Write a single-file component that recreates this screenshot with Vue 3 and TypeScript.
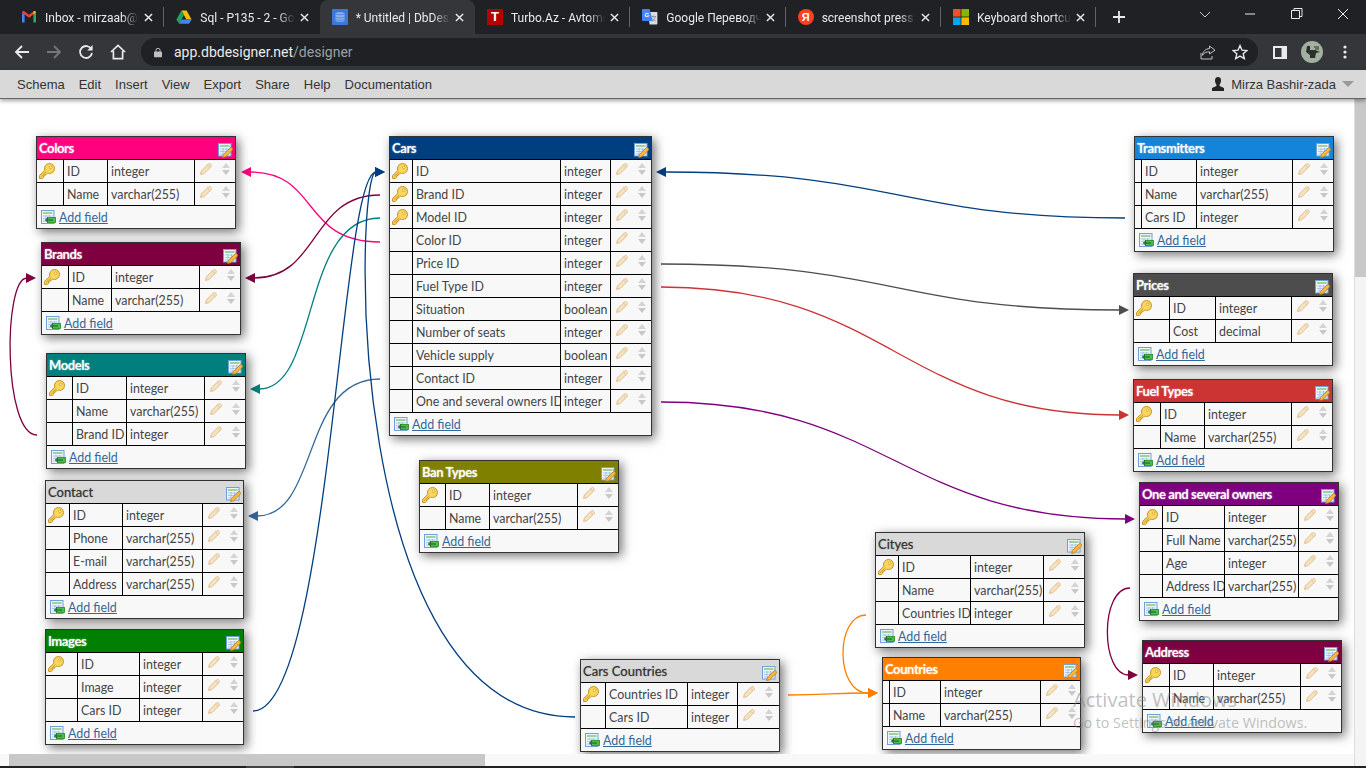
<script setup lang="ts">
interface Field { name: string; type: string; key?: boolean }
interface Table {
  title: string
  x: number
  y: number
  right: number
  lines: [number, number, number]
  color: string
  dark?: boolean
  fields: Field[]
}

const f = (name: string, type: string, key = false): Field => ({ name, type, key })
const V = 'varchar(255)'
const I = 'integer'

const tables: Table[] = [
  { title: 'Colors', x: 36, y: 136, right: 236, lines: [64, 108, 195], color: '#ff007f', fields: [f('ID', I, true), f('Name', V)] },
  { title: 'Brands', x: 41, y: 242, right: 241, lines: [69, 112, 200], color: '#7f0040', fields: [f('ID', I, true), f('Name', V)] },
  { title: 'Models', x: 46, y: 353, right: 246, lines: [73, 127, 205], color: '#007f7f', fields: [f('ID', I, true), f('Name', V), f('Brand ID', I)] },
  { title: 'Contact', x: 45, y: 480, right: 244, lines: [70, 123, 203], color: '#d9d9d9', dark: true, fields: [f('ID', I, true), f('Phone', V), f('E-mail', V), f('Address', V)] },
  { title: 'Images', x: 45, y: 629, right: 244, lines: [78, 140, 203], color: '#007f00', fields: [f('ID', I, true), f('Image', I), f('Cars ID', I)] },
  {
    title: 'Cars', x: 389, y: 136, right: 652, lines: [413, 561, 611], color: '#003f7f',
    fields: [f('ID', I, true), f('Brand ID', I, true), f('Model ID', I, true), f('Color ID', I), f('Price ID', I), f('Fuel Type ID', I), f('Situation', 'boolean'), f('Number of seats', I), f('Vehicle supply', 'boolean'), f('Contact ID', I), f('One and several owners ID', I)]
  },
  { title: 'Ban Types', x: 419, y: 460, right: 619, lines: [446, 490, 578], color: '#7f7f00', fields: [f('ID', I, true), f('Name', V)] },
  { title: 'Transmitters', x: 1134, y: 136, right: 1334, lines: [1142, 1197, 1293], color: '#1384d8', fields: [f('ID', I), f('Name', V), f('Cars ID', I)] },
  { title: 'Prices', x: 1133, y: 273, right: 1333, lines: [1170, 1216, 1292], color: '#4d4d4d', fields: [f('ID', I, true), f('Cost', 'decimal')] },
  { title: 'Fuel Types', x: 1133, y: 379, right: 1333, lines: [1161, 1205, 1292], color: '#cc3333', fields: [f('ID', I, true), f('Name', V)] },
  { title: 'One and several owners', x: 1139, y: 482, right: 1339, lines: [1163, 1225, 1299], color: '#7f007f', fields: [f('ID', I, true), f('Full Name', V), f('Age', I), f('Address ID', V)] },
  { title: 'Cityes', x: 875, y: 532, right: 1085, lines: [899, 971, 1044], color: '#d9d9d9', dark: true, fields: [f('ID', I, true), f('Name', V), f('Countries ID', I)] },
  { title: 'Cars Countries', x: 580, y: 659, right: 780, lines: [606, 688, 738], color: '#d9d9d9', dark: true, fields: [f('Countries ID', I, true), f('Cars ID', I)] },
  { title: 'Countries', x: 882, y: 657, right: 1081, lines: [890, 941, 1041], color: '#ff7f00', fields: [f('ID', I), f('Name', V)] },
  { title: 'Address', x: 1142, y: 640, right: 1342, lines: [1170, 1214, 1301], color: '#7f0040', fields: [f('ID', I, true), f('Name', V)] }
]

interface Link { d: string; color: string; tip: [number, number]; dir: 1 | -1 }

const links: Link[] = [
  { d: 'M380 242 C 300 242 320 172 250 172', color: '#ff007f', tip: [241, 172], dir: -1 },
  { d: 'M380 195 C 310 195 320 278 254 278', color: '#7f0040', tip: [245, 278], dir: -1 },
  { d: 'M380 218 C 300 218 320 389 259 389', color: '#007f7f', tip: [250, 389], dir: -1 },
  { d: 'M380 379 C 300 379 320 516 257 516', color: '#336699', tip: [248, 516], dir: -1 },
  { d: 'M253 711 C 330 711 340 172 376 172', color: '#003f7f', tip: [385, 172], dir: 1 },
  { d: 'M575 717 C 340 717 355 172 376 172', color: '#003f7f', tip: [385, 172], dir: 1 },
  { d: 'M1125 218 C 900 218 900 172 665 172', color: '#003f7f', tip: [656, 172], dir: -1 },
  { d: 'M661 264 C 900 264 890 310 1120 310', color: '#4d4d4d', tip: [1129, 310], dir: 1 },
  { d: 'M661 287 C 890 287 900 415 1120 415', color: '#cc3333', tip: [1129, 415], dir: 1 },
  { d: 'M661 402 C 890 402 900 519 1126 519', color: '#7f007f', tip: [1135, 519], dir: 1 },
  { d: 'M37 435 C 3 435 3 278 27 278', color: '#7f0040', tip: [36, 278], dir: 1 },
  { d: 'M1130 588 C 1100 588 1100 675 1129 675', color: '#7f0040', tip: [1138, 675], dir: 1 },
  { d: 'M788 695 C 830 695 830 693 868 693', color: '#ff7f00', tip: [878, 693], dir: 1 },
  { d: 'M866 615 C 835 615 835 693 868 693', color: '#ff7f00', tip: [878, 693], dir: 1 }
]

const head = (l: Link) => {
  const [x, y] = l.tip
  const b = x - l.dir * 10
  return `${x},${y} ${b},${y - 5} ${b},${y + 5}`
}

const tableStyle = (t: Table) => ({
  left: `${t.x}px`,
  top: `${t.y - 99}px`,
  width: `${t.right - t.x}px`
})

const headStyle = (t: Table) => ({ background: t.color })

const rowStyle = (t: Table) => ({
  gridTemplateColumns: `${t.lines[0] - t.x - 1}px ${t.lines[1] - t.lines[0]}px ${t.lines[2] - t.lines[1]}px 1fr`
})

const tabs = [
  { id: 'gmail', title: 'Inbox - mirzaab@gmail.com', sep: true },
  { id: 'drive', title: 'Sql - P135 - 2 - Google Drive', sep: false },
  { id: 'db', title: '* Untitled | DbDesigner', sep: false, active: true },
  { id: 'turbo', title: 'Turbo.Az - Avtomobil elanları', sep: true },
  { id: 'translate', title: 'Google Переводчик', sep: true },
  { id: 'ya', title: 'screenshot press', sep: true },
  { id: 'ms', title: 'Keyboard shortcuts', sep: true }
]

const menu = ['Schema', 'Edit', 'Insert', 'View', 'Export', 'Share', 'Help', 'Documentation']
</script>

<template>
  <div class="app">
    <svg class="defs" width="0" height="0">
      <symbol id="key" viewBox="0 0 16 16">
        <path d="M10.5 .5a5 5 0 0 1 0 10c-.7 0-1.300-.1-1.900-.4L7.400 11.300H6v1.500H4.500v1.400L3.400 15.400H.6V12.400L5.900 7.400A5 5 0 0 1 10.500 .5z" fill="#f9d65c" stroke="#c8921e" stroke-width="1" />
        <circle cx="11.600" cy="4.300" r="1.300" fill="#fff6c8" stroke="#c8921e" stroke-width=".7" />
        <path d="M2 13.600 7.400 8.600" stroke="#c8921e" stroke-width=".8" fill="none" />
      </symbol>
      <symbol id="pencil" viewBox="0 0 12 12">
        <path d="M.6 11.4 1.4 8 8.4 1a1.4 1.4 0 0 1 2 0l.6.6a1.4 1.4 0 0 1 0 2L4 10.6z" fill="#f7e4bf" stroke="#dfbd8e" stroke-width="1" />
        <path d="M7.4 2 10 4.6" stroke="#dfbd8e" stroke-width=".8" />
      </symbol>
      <symbol id="sort" viewBox="0 0 8 12">
        <path d="M4 0 8 5H0z" fill="#d4d4d4" />
        <path d="M0 7h8L4 12z" fill="#c8c8c8" />
      </symbol>
      <symbol id="edit" viewBox="0 0 15 15">
        <rect x=".5" y=".5" width="12.500" height="12.500" fill="#eef4fc" stroke="#6fa0dc" />
        <path d="M2 3h9.500" stroke="#7cc36a" stroke-width="1.400" />
        <path d="M2 6h9.500M2 8.500h9.500M2 11h9.500M5 5v7M8.500 5v7" stroke="#9dbde6" stroke-width=".8" />
        <path d="M4.600 14.600 5.400 11.600 12 5a1.300 1.300 0 0 1 1.900 0l.4.4a1.300 1.300 0 0 1 0 1.900L7.600 13.800z" fill="#f9b93c" stroke="#b9781a" stroke-width=".8" />
      </symbol>
      <symbol id="add" viewBox="0 0 15 15">
        <rect x=".5" y=".5" width="12.500" height="13" fill="#eef4fc" stroke="#6fa0dc" />
        <path d="M2 3h9.500" stroke="#7cc36a" stroke-width="1.400" />
        <path d="M2 6h9.500M2 8.500h4M2 11h4M5 5v7M8.500 5v2" stroke="#9dbde6" stroke-width=".8" />
        <rect x="6.500" y="7.500" width="8" height="5" fill="#4fbb4a" stroke="#1f8a1f" stroke-width=".8" />
        <path d="M12 10H4.500M7 7.800 4.500 10 7 12.200" stroke="#14601c" stroke-width="1" fill="none" />
      </symbol>
    </svg>

    <div class="tabstrip">
      <div v-for="tab in tabs" :key="tab.id" class="tab" :class="{ active: tab.active, sep: tab.sep }">
        <svg v-if="tab.id === 'gmail'" class="fav" viewBox="0 0 16 16">
          <path d="M1 13.500V3.600L3.600 5.400v8.100z" fill="#4285f4" />
          <path d="M12.400 13.500V5.400L15 3.600v9.900z" fill="#34a853" />
          <path d="M1 3.600C1 2.200 2.600 1.600 3.600 2.400L8 5.800 12.400 2.400C13.400 1.600 15 2.200 15 3.600L12.400 5.400 8 8.800 3.600 5.400z" fill="#ea4335" />
          <path d="M12.400 2.400C13.400 1.600 15 2.200 15 3.600L12.400 5.400z" fill="#fbbc04" />
        </svg>
        <svg v-else-if="tab.id === 'drive'" class="fav" viewBox="0 0 16 16">
          <path d="M5.400 1.600h5.200L15.600 10.400h-5.200z" fill="#fbbc04" />
          <path d="M5.400 1.600 .4 10.400 3 14.800 8 6z" fill="#1fa463" />
          <path d="M5.400 10.400h10.200l-2.600 4.400H3z" fill="#4285f4" />
        </svg>
        <svg v-else-if="tab.id === 'db'" class="fav" viewBox="0 0 16 16">
          <rect width="16" height="16" rx="1" fill="#3c78d8" />
          <path d="M3.500 4.500C3.500 2.800 12.500 2.800 12.500 4.500V11.500C12.500 13.200 3.500 13.200 3.500 11.500z" fill="#8fb4ea" />
          <path d="M3.500 4.500C3.500 6.200 12.500 6.200 12.500 4.500M3.500 7.500C3.500 9.200 12.500 9.200 12.500 7.500M3.500 10C3.500 11.700 12.500 11.700 12.500 10" fill="none" stroke="#3c78d8" stroke-width=".8" />
        </svg>
        <span v-else-if="tab.id === 'turbo'" class="fav turbo">T</span>
        <svg v-else-if="tab.id === 'translate'" class="fav" viewBox="0 0 16 16">
          <path d="M6 3h8.400c.6 0 1 .4 1 1v10.400c0 .6-.4 1-1 1H7.600z" fill="#dadce0" />
          <path d="M1 0h6.600l3.200 12H1c-.6 0-1-.4-1-1V1c0-.6.4-1 1-1z" fill="#4285f4" />
          <text x="2.400" y="8" class="gtext">G</text>
          <path d="M9.500 7.500h4.500M11.700 6.500v1M10.200 12.500c1.600-1 2.600-2.400 3-5M10.400 8.600c.6 1.600 1.800 3 3.400 3.600" stroke="#8a8d93" stroke-width=".8" fill="none" />
        </svg>
        <span v-else-if="tab.id === 'ya'" class="fav ya">Я</span>
        <svg v-else class="fav" viewBox="0 0 16 16">
          <rect width="7.600" height="7.600" fill="#f25022" />
          <rect x="8.400" width="7.600" height="7.600" fill="#7fba00" />
          <rect y="8.400" width="7.600" height="7.600" fill="#00a4ef" />
          <rect x="8.400" y="8.400" width="7.600" height="7.600" fill="#ffb900" />
        </svg>
        <span class="tab-title">{{ tab.title }}</span>
        <svg class="tab-close" viewBox="0 0 10 10">
          <path d="M1 1l8 8M9 1l-8 8" stroke="#e8eaed" stroke-width="1.600" />
        </svg>
      </div>
      <svg class="plus" viewBox="0 0 12 12">
        <path d="M6 0v12M0 6h12" stroke="#e8eaed" stroke-width="1.800" />
      </svg>
      <div class="win-ctrls">
        <svg class="chev" viewBox="0 0 12 7"><path d="M1 1l5 5 5-5" fill="none" stroke="#c8c9cb" stroke-width="1" /></svg>
        <svg class="min" viewBox="0 0 12 12"><path d="M1 6h10" stroke="#e8eaed" stroke-width="1" /></svg>
        <svg class="max" viewBox="0 0 12 12"><path d="M3 2.500V.5h8v8H9M.5 2.500h8v8h-8z" fill="none" stroke="#e8eaed" stroke-width="1" /></svg>
        <svg class="cls" viewBox="0 0 12 12"><path d="M1 1l10 10M11 1L1 11" stroke="#e8eaed" stroke-width="1" /></svg>
      </div>
    </div>

    <div class="toolbar">
      <button class="tool">
        <svg viewBox="0 0 16 16" width="16" height="16"><path d="M15 8H2M8 2 2 8l6 6" fill="none" stroke="#e8eaed" stroke-width="1.800" /></svg>
      </button>
      <button class="tool">
        <svg viewBox="0 0 16 16" width="16" height="16"><path d="M1 8h13M8 2l6 6-6 6" fill="none" stroke="#75777b" stroke-width="1.800" /></svg>
      </button>
      <button class="tool">
        <svg viewBox="0 0 16 16" width="16" height="16"><path d="M13.400 5.200A6 6 0 1 0 14 9" fill="none" stroke="#e8eaed" stroke-width="1.800" /><path d="M14.600 1v5.400H9.200z" fill="#e8eaed" /></svg>
      </button>
      <button class="tool">
        <svg viewBox="0 0 16 16" width="16" height="16"><path d="M1 8 8 1.400 15 8M3.400 7V14.600H12.600V7" fill="none" stroke="#e8eaed" stroke-width="1.700" /></svg>
      </button>
      <div class="omnibox">
        <svg class="lock" viewBox="0 0 10 12"><path d="M2.400 5V3.400a2.600 2.600 0 0 1 5.200 0V5" fill="none" stroke="#bdc1c6" stroke-width="1.200" /><rect y="4.600" width="10" height="7.400" rx="1" fill="#bdc1c6" /></svg>
        <span class="url">app.dbdesigner.net<span class="url-path">/designer</span></span>
        <svg class="omni-share" viewBox="0 0 16 16"><path d="M9.500 2 15 6.200 9.500 10V7.800C6 7.800 3.800 9 2.400 11.400 2.800 7.400 5.400 4.800 9.500 4.500z" fill="none" stroke="#bdc1c6" stroke-width="1" /><path d="M1 9v6h11v-3" fill="none" stroke="#bdc1c6" stroke-width="1" /></svg>
        <svg class="omni-star" viewBox="0 0 16 16"><path d="M8 1.600 10 6.200l4.900.4-3.700 3.200 1.100 4.800L8 12.100l-4.300 2.500 1.100-4.800L1.100 6.600 6 6.200z" fill="none" stroke="#e8eaed" stroke-width="1.400" /></svg>
      </div>
      <button class="tool panel">
        <svg viewBox="0 0 14 13" width="14" height="13"><rect width="14" height="13" fill="#e8eaed" /><rect x="2" y="2" width="6.500" height="9" fill="#35363a" /></svg>
      </button>
      <button class="tool">
        <svg viewBox="0 0 22 22" width="22" height="22"><circle cx="11" cy="11" r="11" fill="#a3b0a0" /><path d="M6 5h3v4h5l5 2-4 1-1 5H9v-3L5 11z" fill="#2c302c" /><path d="M13 6h5M14 8h4" stroke="#2c302c" /></svg>
      </button>
      <button class="tool dots">
        <svg viewBox="0 0 4 14" width="4" height="14"><circle cx="2" cy="2" r="1.600" fill="#e8eaed" /><circle cx="2" cy="7" r="1.600" fill="#e8eaed" /><circle cx="2" cy="12" r="1.600" fill="#e8eaed" /></svg>
      </button>
    </div>

    <div class="menubar">
      <span v-for="item in menu" :key="item" class="menu-item">{{ item }}</span>
      <div class="user">
        <svg viewBox="0 0 14 14" width="14" height="14"><path d="M7 0c2 0 3 1.400 3 3.400C10 5.400 9 7 8.600 7.600V9l4.400 2v3H1v-3l4.400-2V7.600C5 7 4 5.400 4 3.400 4 1.400 5 0 7 0z" fill="#222" /></svg>
        <span class="user-name">Mirza Bashir-zada</span>
        <span class="caret"></span>
      </div>
    </div>

    <div class="workspace">
      <div class="stage">
        <div class="canvas">
          <svg class="links" viewBox="0 99 1354 655" width="1354" height="655">
            <g v-for="(l, i) in links" :key="i">
              <path :d="l.d" fill="none" :stroke="l.color" stroke-width="1.300" />
              <polygon :points="head(l)" :fill="l.color" />
            </g>
          </svg>

          <div v-for="t in tables" :key="t.title" class="table" :style="tableStyle(t)">
            <div class="table-head" :class="t.dark ? 'grey' : 'light'" :style="headStyle(t)">
              <span>{{ t.title }}</span>
              <svg class="edit-icon" width="15" height="15"><use href="#edit" /></svg>
            </div>
            <div v-for="field in t.fields" :key="field.name" class="row" :style="rowStyle(t)">
              <div class="cell key-cell">
                <svg v-if="field.key" width="16" height="16"><use href="#key" /></svg>
              </div>
              <div class="cell">{{ field.name }}</div>
              <div class="cell">{{ field.type }}</div>
              <div class="actions">
                <svg width="12" height="12"><use href="#pencil" /></svg>
                <svg width="8" height="12"><use href="#sort" /></svg>
              </div>
            </div>
            <div class="table-foot">
              <svg width="15" height="15"><use href="#add" /></svg>
              <a class="add-link">Add field</a>
            </div>
          </div>

          <div class="watermark">
            <div class="wm-title">Activate Windows</div>
            <div class="wm-sub">Go to Settings to activate Windows.</div>
          </div>
        </div>
        <div class="hbar"><div class="hthumb"></div></div>
      </div>
      <div class="vbar"><div class="vthumb"></div></div>
    </div>

    <div class="taskstrip"><div class="task-active"></div></div>
  </div>
</template>

<style scoped>
.app {
  width: 1366px;
  height: 768px;
  display: flex;
  flex-direction: column;
  overflow: hidden;
  background: #fff;
}

.defs {
  position: absolute;
}

.tabstrip {
  height: 34px;
  flex: none;
  background: #202124;
  display: flex;
  padding-left: 9px;
  font-family: Roboto, sans-serif;
  position: relative;
}

.tab {
  width: 155.33px;
  height: 34px;
  box-sizing: border-box;
  padding: 0 10px 0 12px;
  display: flex;
  align-items: center;
  gap: 8px;
  position: relative;
  color: #e8eaed;
  font-size: 12px;
  flex: none;
}

.tab.sep::after {
  content: '';
  position: absolute;
  right: 0;
  top: 7px;
  height: 20px;
  width: 1px;
  background: #5f6368;
}

.tab.active {
  background: #35363a;
  border-radius: 8px 8px 0 0;
}

.fav {
  width: 16px;
  height: 16px;
  flex: none;
}

.turbo {
  background: #b30000;
  color: #fff;
  font: bold 13px/16px "Liberation Sans", sans-serif;
  text-align: center;
}

.ya {
  background: #fc3f1d;
  border-radius: 50%;
  color: #fff;
  font: bold 11px/16px "Liberation Sans", sans-serif;
  text-align: center;
}

.gtext {
  font: bold 6px "Liberation Sans", sans-serif;
  fill: #fff;
}

.tab-title {
  flex: 1;
  min-width: 0;
  padding-top: 1px;
  white-space: nowrap;
  overflow: hidden;
  -webkit-mask-image: linear-gradient(to right, #000 82%, transparent 100%);
  mask-image: linear-gradient(to right, #000 82%, transparent 100%);
}

.tab-close {
  width: 9px;
  height: 9px;
  flex: none;
  margin: 0 1px 0 -3px;
}

.plus {
  width: 12px;
  height: 12px;
  margin: 11px 0 0 17px;
}

.win-ctrls {
  position: absolute;
  top: 0;
  right: 0;
}

.win-ctrls svg {
  position: absolute;
  width: 12px;
  height: 12px;
  top: 8px;
}

.win-ctrls .chev {
  right: 155px;
  top: 11px;
  height: 7px;
}

.win-ctrls .min { right: 110px; }
.win-ctrls .max { right: 63px; }
.win-ctrls .cls { right: 17px; }

.toolbar {
  height: 36px;
  flex: none;
  background: #35363a;
  display: flex;
  align-items: center;
  padding-left: 6px;
}

.tool {
  width: 32px;
  height: 32px;
  flex: none;
  padding: 0;
  border: 0;
  background: none;
  display: flex;
  align-items: center;
  justify-content: center;
}

.panel {
  margin-left: 6px;
}

.dots {
  margin-left: 1px;
}

.omnibox {
  width: 1117px;
  height: 28px;
  margin-left: 7px;
  border-radius: 14px;
  background: #202124;
  display: flex;
  align-items: center;
  box-sizing: border-box;
  padding-left: 13px;
  font-family: Roboto, sans-serif;
}

.lock {
  width: 8px;
  height: 11px;
  flex: none;
}

.url {
  margin-left: 12px;
  font-size: 14px;
  color: #e8eaed;
  flex: 1;
}

.url-path {
  color: #9aa0a6;
}

.omni-share {
  width: 16px;
  height: 16px;
  margin-right: 16px;
}

.omni-star {
  width: 16px;
  height: 16px;
  margin-right: 10px;
}

.menubar {
  height: 29px;
  flex: none;
  box-sizing: border-box;
  background: #d9d9d9;
  border-bottom: 1px solid #666;
  box-shadow: 0 2px 4px rgba(0, 0, 0, 0.35);
  display: flex;
  align-items: center;
  padding: 0 12px 0 17px;
  gap: 14px;
  font: 13px "Liberation Sans", sans-serif;
  color: #333;
  position: relative;
  z-index: 3;
}

.user {
  margin-left: auto;
  display: flex;
  align-items: center;
  gap: 6px;
}

.caret {
  width: 0;
  height: 0;
  border-left: 6px solid transparent;
  border-right: 6px solid transparent;
  border-top: 6px solid #999;
}

.workspace {
  height: 667px;
  flex: none;
  display: flex;
}

.stage {
  width: 1354px;
  display: flex;
  flex-direction: column;
}

.canvas {
  height: 655px;
  position: relative;
  overflow: hidden;
  background: #fff;
}

.links {
  position: absolute;
  left: 0;
  top: 0;
}

.table {
  position: absolute;
  box-sizing: border-box;
  border: 1px solid #333;
  background: #f8f8f8;
  box-shadow: 3px 3px 10px rgba(0, 0, 0, 0.55);
  font: 12.4px Lato, sans-serif;
  color: #444;
}

.table-head {
  height: 22px;
  display: flex;
  align-items: center;
  justify-content: space-between;
  padding: 0 2px;
  font-size: 13px;
}

.table-head.light {
  color: #fff;
  font-weight: 700;
  letter-spacing: -0.4px;
}

.table-head.light span {
  text-shadow: 0 0 2px rgba(255, 255, 255, 0.5);
}

.table-head.grey {
  color: #333;
  text-shadow: 0 0 1px rgba(0, 0, 0, 0.45);
}

.edit-icon {
  margin-top: 4px;
}

.row {
  display: grid;
  height: 23px;
  box-sizing: border-box;
  border-top: 1px solid #000;
}

.cell {
  border-right: 1px solid #000;
  padding-left: 3px;
  line-height: 24px;
  white-space: nowrap;
  overflow: hidden;
}

.key-cell {
  padding-left: 2px;
  display: flex;
  align-items: center;
}

.actions {
  display: flex;
  align-items: center;
  padding: 0 0 4px 5px;
  gap: 10px;
}

.table-foot {
  height: 23px;
  box-sizing: border-box;
  border-top: 1px solid #000;
  display: flex;
  align-items: center;
  padding-left: 4px;
  gap: 3px;
}

.add-link {
  color: #336699;
  text-decoration: underline;
}

.watermark {
  position: absolute;
  left: 1073px;
  top: 587px;
  color: rgba(130, 130, 130, 0.5);
  font-family: "Open Sans", sans-serif;
  z-index: 2;
  pointer-events: none;
  white-space: nowrap;
}

.wm-title {
  font-size: 20px;
  line-height: 28px;
}

.wm-sub {
  font-size: 14.3px;
  line-height: 18px;
}

.hbar {
  height: 12px;
  background: #f8f8f8;
  padding-left: 9px;
}

.hthumb {
  width: 476px;
  height: 12px;
  background: #c8c8c8;
}

.vbar {
  width: 12px;
  background: #f4f4f4;
  border-left: 1px solid #ddd;
  box-sizing: border-box;
}

.vthumb {
  height: 178px;
  background: #c8c8c8;
}

.taskstrip {
  height: 2px;
  background: #222;
  position: relative;
}

.task-active {
  position: absolute;
  left: 246px;
  width: 48px;
  height: 2px;
  background: #444;
}
</style>

<style>
html, body {
  margin: 0;
  background: #fff;
  overflow: hidden;
}
</style>
